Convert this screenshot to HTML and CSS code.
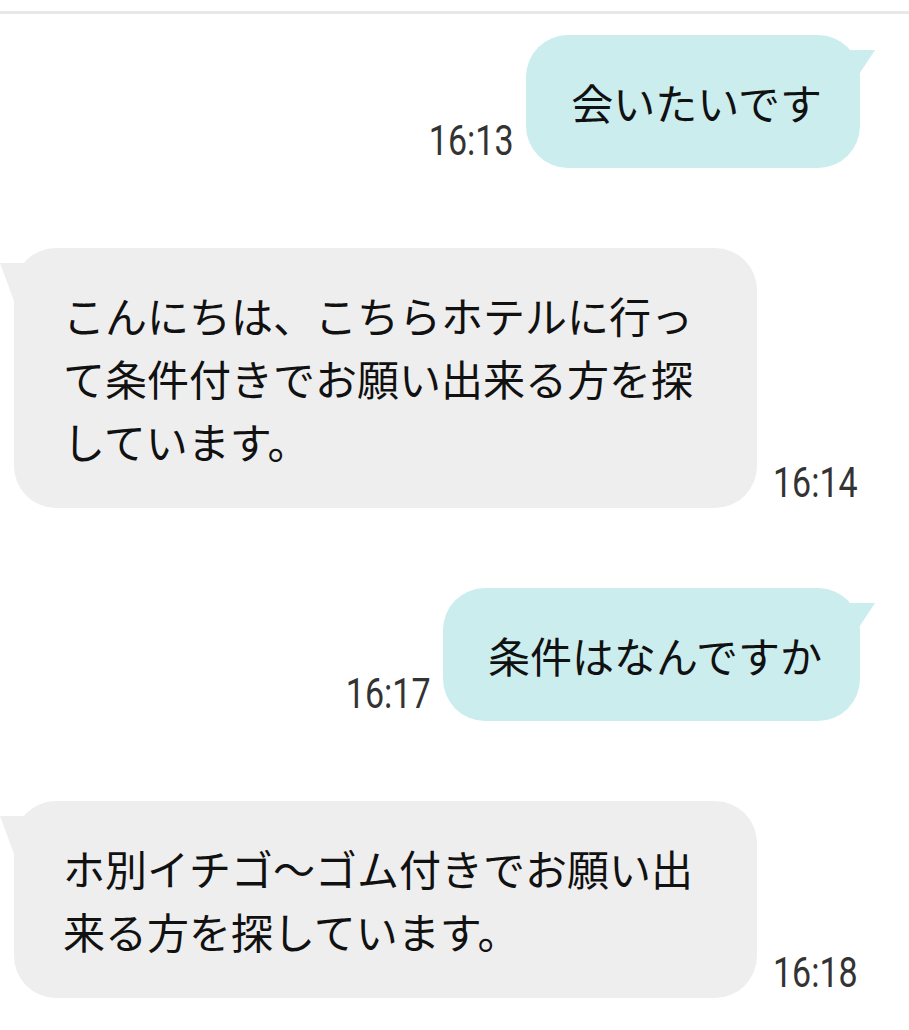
FILE: index.html
```html
<!DOCTYPE html>
<html lang="ja">
<head>
    <meta charset="UTF-8">
    <meta name="viewport" content="width=device-width, initial-scale=1.0">
    <title>トーク</title>
    <link rel="stylesheet" href="styles.css">
</head>
<body>
    <div class="topline"></div>

    <div class="chat">
        <div class="row sent">
            <span class="time">16:13</span>
            <div class="bubble">会いたいです</div>
        </div>

        <div class="row received">
            <div class="bubble">こんにちは、こちらホテルに行って条件付きでお願い出来る方を探しています。</div>
            <span class="time">16:14</span>
        </div>

        <div class="row sent">
            <span class="time">16:17</span>
            <div class="bubble">条件はなんですか</div>
        </div>

        <div class="row received">
            <div class="bubble">ホ別イチゴ〜ゴム付きでお願い出来る方を探しています。</div>
            <span class="time">16:18</span>
        </div>
    </div>
</body>
</html>
```

FILE: styles.css
```css
body {
    margin: 0;
    background-color: #ffffff;
    font-family: "Noto Sans CJK JP", sans-serif;
    color: #111;
}
.topline {
    height: 3px;
    margin-top: 11px;
    background-color: #e8e8e8;
}
.chat {
    display: flex;
    flex-direction: column;
    gap: 80px;
    padding-top: 21px;
}
.row {
    display: flex;
    align-items: flex-end;
}
.sent {
    justify-content: flex-end;
    padding-right: 49px;
}
.received {
    padding-left: 14px;
}
.bubble {
    position: relative;
    box-sizing: border-box;
    font-size: 42px;
    line-height: 63px;
    padding: 35px 38px 35px 45px;
    border-radius: 42px;
}
.sent .bubble {
    background-color: #cbedee;
}
.received .bubble {
    max-width: 743px;
    padding: 35px 50px 36px 49px;
    background-color: #eeeeee;
}
/* bubble tails */
.bubble::before {
    content: "";
    position: absolute;
    top: 15px;
    width: 40px;
    height: 38px;
}
.sent .bubble::before {
    right: -15px;
    background-color: #cbedee;
    clip-path: polygon(0 0, 100% 0, 15px 100%, 0 100%);
}
.received .bubble::before {
    left: -14px;
    background-color: #eeeeee;
    clip-path: polygon(0 0, 100% 0, 100% 100%, 14px 100%);
}
.time {
    display: inline-block;
    font-family: Roboto, "Liberation Sans", sans-serif;
    font-size: 42px;
    line-height: 1;
    color: #333;
    transform: scaleX(0.81);
}
.sent .time {
    margin-right: 13px;
    margin-bottom: 6px;
    transform-origin: right center;
}
.received .time {
    margin-left: 16px;
    margin-bottom: 4px;
    transform-origin: left center;
}
```
